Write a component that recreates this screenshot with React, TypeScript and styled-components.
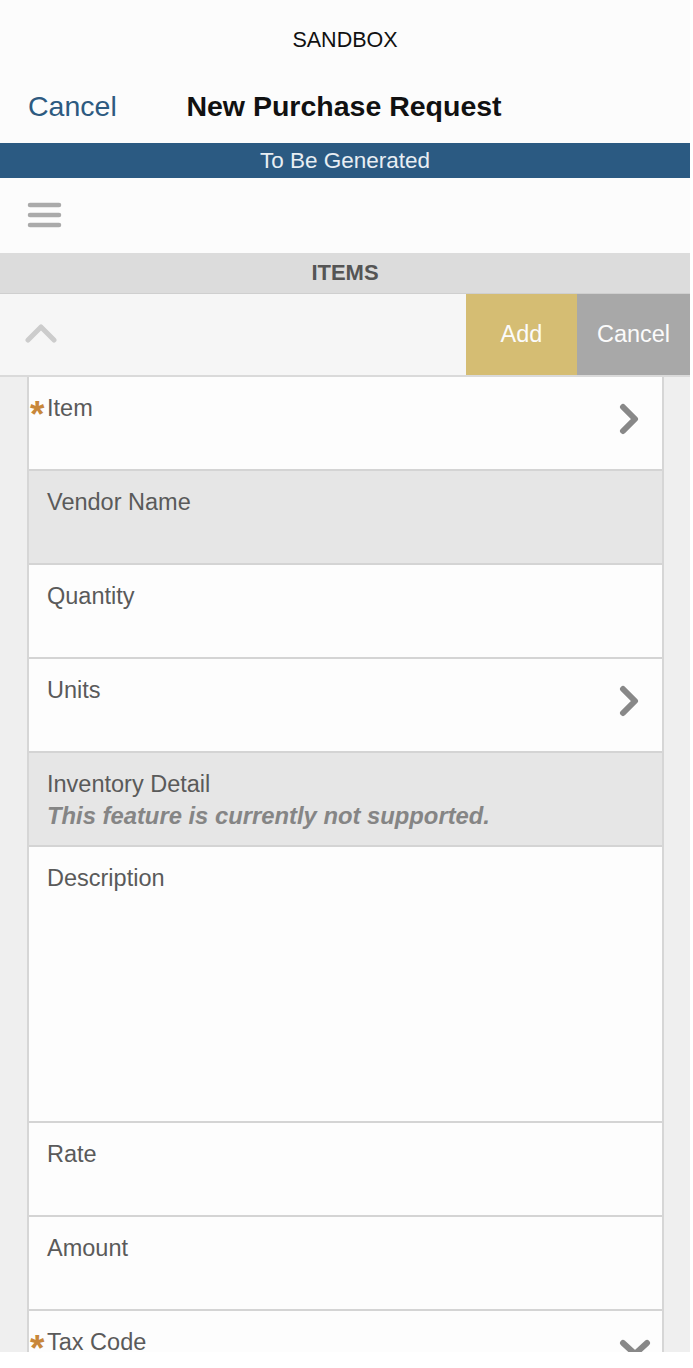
import React from "react";
import styled, { createGlobalStyle } from "styled-components";

const Global = createGlobalStyle`
  html, body { margin: 0; padding: 0; background: #ffffff; }
  body { font-family: "Liberation Sans", Arial, Helvetica, sans-serif; }
  * { box-sizing: border-box; }
`;

const Screen = styled.div`
  width: 690px;
  height: 1352px;
  overflow: hidden;
  background: #fcfcfc;
  display: flex;
  flex-direction: column;
  & > * { flex-shrink: 0; }
`;

const Header = styled.header`
  height: 143px;
  display: flex;
  flex-direction: column;
  background: #fcfcfc;
`;

const Env = styled.div`
  height: 80px;
  display: flex;
  align-items: center;
  justify-content: center;
  font-size: 21.5px;
  color: #111;
  padding-top: 1px;
`;

const TitleRow = styled.div`
  flex: 1;
  display: grid;
  grid-template-columns: 1fr auto 1fr;
  align-items: center;
  padding: 0 0 10px 28px;
`;

const NavCancel = styled.span`
  font-size: 28.5px;
  color: #2d5a80;
  justify-self: start;
`;

const Title = styled.h1`
  margin: 0;
  font-size: 28.5px;
  font-weight: 700;
  color: #111;
  position: relative;
  left: -15px;
`;

const StatusBar = styled.div`
  height: 35px;
  background: #2b5a82;
  color: #e8eef3;
  font-size: 22.5px;
  display: flex;
  align-items: center;
  justify-content: center;
`;

const MenuBar = styled.div`
  height: 75px;
  display: flex;
  align-items: center;
  padding: 0 0 2px 27px;
  background: #fcfcfc;
`;

const SectionHeader = styled.div`
  height: 41px;
  background: #dcdcdc;
  color: #555;
  font-weight: 700;
  font-size: 22px;
  display: flex;
  align-items: center;
  justify-content: center;
  border-bottom: 1px solid #cfcfcf;
`;

const Toolbar = styled.div`
  height: 83px;
  display: flex;
  align-items: stretch;
  background: #f6f6f6;
  border-bottom: 2px solid #dadada;
`;

const Collapse = styled.div`
  flex: 1;
  display: flex;
  align-items: center;
  padding-left: 25px;
  padding-bottom: 4px;
`;

const ActionButton = styled.div<{ $bg: string; $w: number }>`
  width: ${(p) => p.$w}px;
  background: ${(p) => p.$bg};
  color: #fbfbfb;
  font-size: 23.5px;
  display: flex;
  align-items: center;
  justify-content: center;
`;

const FormArea = styled.div`
  flex: 1;
  background: #efefef;
  padding: 0 26px 0 27px;
`;

const Card = styled.div`
  border-left: 2px solid #d6d6d6;
  border-right: 2px solid #d6d6d6;
  background: #fdfdfd;
  display: flex;
  flex-direction: column;
`;

const Row = styled.div<{ $h?: number; $muted?: boolean }>`
  height: ${(p) => p.$h ?? 94}px;
  background: ${(p) => (p.$muted ? "#e6e6e6" : "#fdfdfd")};
  border-bottom: 2px solid #d4d4d4;
  display: flex;
  align-items: flex-start;
  justify-content: space-between;
  padding: 18px 21px 0 18px;
  flex-shrink: 0;
`;

const LabelBlock = styled.div`
  display: flex;
  flex-direction: column;
  gap: 4px;
`;

const Label = styled.div<{ $req?: boolean }>`
  font-size: 23.5px;
  color: #5a5a5a;
  margin-left: ${(p) => (p.$req ? "-17px" : "0")};
  white-space: nowrap;
`;

const Star = styled.span`
  display: inline-block;
  color: #c8873a;
  font-size: 37px;
  font-weight: 700;
  line-height: 1;
  width: 17px;
  vertical-align: -11px;
`;

const Note = styled.div`
  font-size: 23.8px;
  font-style: italic;
  font-weight: 700;
  color: #858585;
`;

const ChevronBox = styled.div<{ $offset: number; $shift?: number }>`
  margin-top: ${(p) => p.$offset}px;
  margin-right: ${(p) => -(p.$shift ?? 0)}px;
`;

const Hamburger = () => (
  <svg width="36" height="28" viewBox="0 0 36 28">
    <g stroke="#aaaaaa" strokeWidth="4.5" strokeLinecap="round">
      <line x1="3" y1="4" x2="32" y2="4" />
      <line x1="3" y1="14" x2="32" y2="14" />
      <line x1="3" y1="24" x2="32" y2="24" />
    </g>
  </svg>
);

const ChevronUp = () => (
  <svg width="34" height="22" viewBox="0 0 34 22">
    <polyline points="3,18 16,5 29,18" fill="none" stroke="#cccccc" strokeWidth="5" strokeLinecap="round" strokeLinejoin="round" />
  </svg>
);

const ChevronRight = () => (
  <svg width="22" height="32" viewBox="0 0 22 32">
    <polyline points="4,4 16,16 4,28" fill="none" stroke="#888888" strokeWidth="6" strokeLinecap="round" strokeLinejoin="round" />
  </svg>
);

const ChevronDown = () => (
  <svg width="34" height="22" viewBox="0 0 34 22">
    <polyline points="4,4 16,15 28,4" fill="none" stroke="#888888" strokeWidth="6" strokeLinecap="round" strokeLinejoin="round" />
  </svg>
);

type Field = {
  label: string;
  req?: boolean;
  muted?: boolean;
  note?: string;
  h?: number;
  chevron?: "right" | "down";
};

const fields: Field[] = [
  { label: "Item", req: true, chevron: "right" },
  { label: "Vendor Name", muted: true },
  { label: "Quantity" },
  { label: "Units", chevron: "right" },
  { label: "Inventory Detail", muted: true, note: "This feature is currently not supported." },
  { label: "Description", h: 276 },
  { label: "Rate" },
  { label: "Amount" },
  { label: "Tax Code", req: true, chevron: "down" },
];

export default function App() {
  return (
    <Screen>
      <Global />
      <Header>
        <Env>SANDBOX</Env>
        <TitleRow>
          <NavCancel>Cancel</NavCancel>
          <Title>New Purchase Request</Title>
          <span />
        </TitleRow>
      </Header>
      <StatusBar>To Be Generated</StatusBar>
      <MenuBar>
        <Hamburger />
      </MenuBar>
      <SectionHeader>ITEMS</SectionHeader>
      <Toolbar>
        <Collapse>
          <ChevronUp />
        </Collapse>
        <ActionButton $bg="#d5bd73" $w={111}>Add</ActionButton>
        <ActionButton $bg="#a8a8a8" $w={113}>Cancel</ActionButton>
      </Toolbar>
      <FormArea>
        <Card>
          {fields.map((f) => (
            <Row key={f.label} $h={f.h} $muted={f.muted}>
              <LabelBlock>
                <Label $req={f.req}>
                  {f.req && <Star>*</Star>}
                  {f.label}
                </Label>
                {f.note && <Note>{f.note}</Note>}
              </LabelBlock>
              {f.chevron === "right" && (
                <ChevronBox $offset={8}>
                  <ChevronRight />
                </ChevronBox>
              )}
              {f.chevron === "down" && (
                <ChevronBox $offset={10} $shift={12}>
                  <ChevronDown />
                </ChevronBox>
              )}
            </Row>
          ))}
        </Card>
      </FormArea>
    </Screen>
  );
}
